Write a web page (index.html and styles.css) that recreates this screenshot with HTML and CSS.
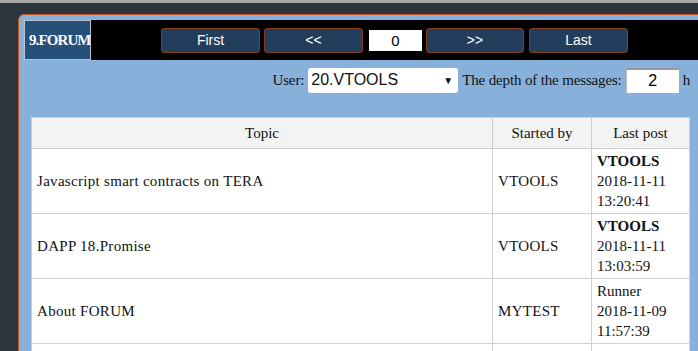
FILE: index.html
```html
<!DOCTYPE html>
<html lang="en">
<head>
  <meta charset="UTF-8">
  <title>Forum</title>
  <link rel="stylesheet" href="styles.css">
</head>
<body>
  <div class="panel">
    <div class="header">
      <div class="title">9.FORUM</div>
      <div class="pager">
        <button class="nav">First</button>
        <button class="nav">&lt;&lt;</button>
        <input class="page" type="text" value="0">
        <button class="nav next">&gt;&gt;</button>
        <button class="nav">Last</button>
      </div>
    </div>

    <div class="filter">
      <span class="label">User:</span>
      <div class="select">
        <span>20.VTOOLS</span>
        <span class="arrow">&#9660;</span>
      </div>
      <span class="label">The depth of the messages:</span>
      <input class="depth" type="text" value="2">
      <span class="label">h</span>
    </div>

    <table class="topics">
      <tr>
        <th class="c-topic">Topic</th>
        <th class="c-by">Started by</th>
        <th class="c-last">Last post</th>
      </tr>
      <tr>
        <td>Javascript smart contracts on TERA</td>
        <td>VTOOLS</td>
        <td class="last"><b>VTOOLS</b><br>2018-11-11<br>13:20:41</td>
      </tr>
      <tr>
        <td>DAPP 18.Promise</td>
        <td>VTOOLS</td>
        <td class="last"><b>VTOOLS</b><br>2018-11-11<br>13:03:59</td>
      </tr>
      <tr>
        <td>About FORUM</td>
        <td>MYTEST</td>
        <td class="last">Runner<br>2018-11-09<br>11:57:39</td>
      </tr>
      <tr>
        <td></td>
        <td></td>
        <td></td>
      </tr>
    </table>
  </div>
</body>
</html>
```

FILE: styles.css
```css
body {
  margin: 0;
  background-color: #2d353c;
  border-top: 3px solid #a8a8a8;
  font-family: 'Liberation Serif', serif;
  color: #111;
  overflow: hidden;
  height: 348px;
}
.panel {
  margin: 11px 0 0 18px;
  padding: 5px 0 0 5px;
  background-color: #87b1db;
  border: 1px solid #c4531f;
  border-right: none;
  border-bottom: none;
  border-radius: 6px 0 0 0;
}
.header {
  display: flex;
  align-items: center;
  height: 40px;
  background-color: #000;
}
.title {
  box-sizing: border-box;
  width: 67px;
  height: 40px;
  line-height: 38px;
  background-color: #25507a;
  border: 1px solid #b9c3cc;
  color: #fff;
  font-weight: bold;
  font-size: 15px;
  letter-spacing: -0.9px;
  padding-left: 4px;
}
.pager {
  display: flex;
  align-items: center;
  gap: 4px;
  margin-left: 70px;
}
.nav {
  width: 99px;
  height: 25px;
  background-color: #233e5c;
  color: #fff;
  border: 1px solid #8a3a17;
  border-radius: 3px;
  font-family: 'Liberation Sans', sans-serif;
  font-size: 14px;
  padding: 0;
}
.next {
  width: 98px;
  margin-right: 1px;
}
.page {
  box-sizing: border-box;
  width: 53px;
  height: 21px;
  margin-left: 2px;
  border: none;
  text-align: center;
  font-family: 'Liberation Sans', sans-serif;
  font-size: 15px;
  padding: 0;
}
.filter {
  display: flex;
  justify-content: flex-end;
  align-items: center;
  gap: 4px;
  height: 36px;
  padding: 2px 8px 0 0;
}
.label {
  font-size: 15px;
  letter-spacing: -0.15px;
}
.select {
  box-sizing: border-box;
  display: flex;
  justify-content: space-between;
  align-items: center;
  width: 150px;
  height: 25px;
  padding: 0 5px 0 3px;
  background-color: #fff;
  border-radius: 3px;
  font-family: 'Liberation Sans', sans-serif;
  font-size: 16px;
}
.arrow {
  font-size: 10px;
}
.depth {
  box-sizing: border-box;
  width: 53px;
  height: 25px;
  border: none;
  border-top: 2px solid #999;
  border-left: 1px solid #bbb;
  text-align: center;
  font-family: 'Liberation Sans', sans-serif;
  font-size: 16px;
  padding: 0;
}
.topics {
  width: 659px;
  margin: 19px 0 0 7px;
  border-collapse: collapse;
  background-color: #fff;
  font-size: 15px;
}
th, td {
  border: 1px solid #cfcfcf;
  padding: 2px 5px;
  text-align: left;
  font-weight: normal;
  letter-spacing: 0.3px;
}
th {
  height: 26px;
  background-color: #f3f3f3;
  text-align: center;
  letter-spacing: 0;
}
td {
  height: 60px;
}
.c-topic {
  width: 450px;
}
.c-by {
  width: 88px;
}
.last {
  line-height: 20px;
  letter-spacing: 0;
}
```
